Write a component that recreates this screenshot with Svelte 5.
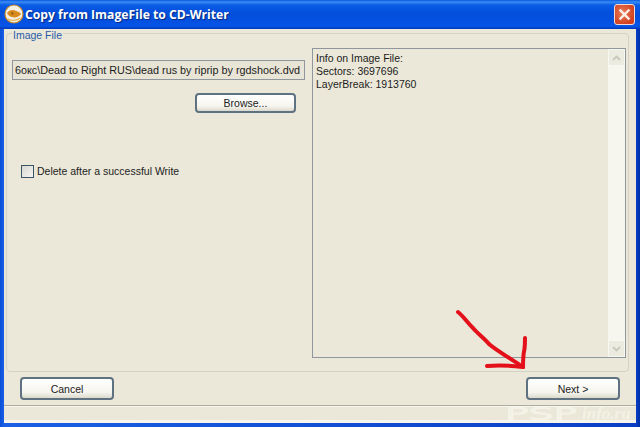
<script lang="ts">
	const path = '6окс\\Dead to Right RUS\\dead rus by riprip by rgdshock.dvd';
	const info = ['Info on Image File:', 'Sectors: 3697696', 'LayerBreak: 1913760'];
</script>

<div class="window">
	<header class="titlebar">
		<svg class="app-icon" width="20" height="20" viewBox="0 0 20 20">
			<circle cx="10" cy="10" r="9" fill="#f4efe0" stroke="#c98a2a" stroke-width="1.2" />
			<path d="M3 9c2-3 6-4 9-2 2 1 4 1 5 3-2 3-6 4-9 3-2 0-4-2-5-4z" fill="#d98a1c" />
			<path d="M7 8l3 1-2 2z" fill="#8a5312" />
			<path d="M4 15c3 2 9 2 12-1" fill="none" stroke="#e8b45a" stroke-width="1.4" />
		</svg>
		<span class="title">Copy from ImageFile to CD-Writer</span>
		<button class="close" aria-label="Close">
			<svg width="21" height="21" viewBox="0 0 21 21">
				<path d="M6 6l9 9M15 6l-9 9" stroke="#fbeee6" stroke-width="2.6" stroke-linecap="square" fill="none" />
			</svg>
		</button>
	</header>

	<main class="client">
		<section class="group">
			<div class="legend">Image File</div>
			<div class="columns">
				<div class="left">
					<div class="path">{path}</div>
					<div class="browse-row"><button class="btn browse">Browse...</button></div>
					<label class="check"><span class="box"></span>Delete after a successful Write</label>
				</div>
				<div class="info">
					<div class="info-text">
						{#each info as line}
							<div>{line}</div>
						{/each}
					</div>
					<div class="scrollbar">
						<span class="arrow">
							<svg width="11" height="8" viewBox="0 0 11 8"><path d="M2 6l3.500-3.500L9 6" fill="none" stroke="#c9c8bc" stroke-width="1.800" /></svg>
						</span>
						<span class="arrow">
							<svg width="11" height="8" viewBox="0 0 11 8"><path d="M2 2l3.500 3.500L9 2" fill="none" stroke="#c9c8bc" stroke-width="1.800" /></svg>
						</span>
					</div>
				</div>
			</div>
		</section>

		<div class="actions">
			<button class="btn wide">Cancel</button>
			<button class="btn wide">Next &gt;</button>
		</div>

		<div class="statusbar"></div>
	</main>

	<svg class="red-arrow" width="90" height="70" viewBox="0 0 90 70">
		<path
			d="M6 7c6 5 9 10 15 16 5 6 11 10 16 16 8 7 24 16 34 23"
			fill="none"
			stroke="#e4101a"
			stroke-width="4"
			stroke-linecap="round"
		/>
		<path d="M35 61c10-1 24-.5 36 1" fill="none" stroke="#e4101a" stroke-width="4" stroke-linecap="round" />
		<path d="M71 62c0-7 0-12 1.500-18 .5-4 .5-8 .5-11" fill="none" stroke="#e4101a" stroke-width="4" stroke-linecap="round" />
	</svg>

	<div class="watermark"><span class="wm-a">PSP</span><span class="wm-b">info.ru</span></div>
</div>

<style>
	:global(body) {
		margin: 0;
	}

	.window {
		position: relative;
		width: 640px;
		height: 427px;
		box-sizing: border-box;
		padding: 0 4px 4px;
		display: flex;
		flex-direction: column;
		overflow: hidden;
		background: linear-gradient(90deg, #0a4fd8 0, #1a60e4 4px, #0a3fc4 636px, #0030a8 100%);
		font-family: 'Liberation Sans', Arial, sans-serif;
		font-size: 10.500px;
		color: #1c1c1c;
	}

	.titlebar {
		height: 29px;
		flex: none;
		margin: 0 -4px;
		padding: 0 5px 0 4px;
		display: flex;
		align-items: center;
		gap: 1px;
		box-sizing: border-box;
		background: linear-gradient(180deg, #0a58e0 0, #3a8cf4 2px, #0a5ce6 5px, #0450dc 12px, #0450e0 22px, #0656ea 26px, #0338b8 29px);
	}

	.app-icon {
		flex: none;
		margin-top: -1px;
	}

	.title {
		flex: 1;
		font-family: 'Open Sans', sans-serif;
		font-weight: 700;
		font-size: 12.200px;
		color: #fff;
		text-shadow: 1px 1px 1px #0a2a80;
		white-space: nowrap;
	}

	.close {
		width: 21px;
		height: 21px;
		padding: 0;
		margin-top: -1px;
		border: 1px solid #f4dcd4;
		border-radius: 3px;
		background: radial-gradient(circle at 40% 40%, #ea7a58, #d2401e 75%);
		display: flex;
		align-items: center;
		justify-content: center;
		box-sizing: border-box;
	}

	.client {
		flex: 1;
		min-height: 0;
		display: flex;
		flex-direction: column;
		background: #ebe8d9;
	}

	.group {
		height: 339px;
		box-sizing: border-box;
		margin: 4px 7px 0 2px;
		padding: 0 2px 0 5px;
		border: 1px solid #d4d2c2;
		border-radius: 4px;
	}

	.legend {
		width: fit-content;
		margin-top: -5px;
		padding: 0 1px;
		background: #ebe8d9;
		color: #2a5aa8;
		line-height: 13px;
	}

	.columns {
		display: grid;
		grid-template-columns: 293px 314px;
		column-gap: 7px;
		margin-top: 6px;
	}

	.left {
		display: flex;
		flex-direction: column;
		padding-top: 12px;
	}

	.path {
		height: 20px;
		box-sizing: border-box;
		border: 1px solid #8f979c;
		background: #e8e5d6;
		padding-left: 2px;
		font-size: 10.800px;
		line-height: 18px;
		white-space: nowrap;
		overflow: hidden;
	}

	.browse-row {
		display: flex;
		justify-content: flex-end;
		padding-right: 9px;
		margin-top: 13px;
	}

	.btn {
		font: inherit;
		color: #222;
		padding: 0;
		border: 2px solid #5f7282;
		border-radius: 4px;
		background: linear-gradient(180deg, #fff 0, #f6f5ee 70%, #dcdacb 100%);
	}

	.browse {
		width: 101px;
		height: 20px;
		line-height: 14px;
	}

	.check {
		display: flex;
		align-items: center;
		gap: 3px;
		margin: 51px 0 0 9px;
		height: 14px;
	}

	.box {
		width: 13px;
		height: 13px;
		box-sizing: border-box;
		border: 1px solid #3c5468;
		background: linear-gradient(135deg, #d8d8d0, #f6f6f0);
	}

	.info {
		height: 310px;
		box-sizing: border-box;
		border: 1px solid #8f979c;
		display: flex;
		background: #ebe8d9;
	}

	.info-text {
		flex: 1;
		padding: 3px 0 0 3px;
		line-height: 13px;
	}

	.scrollbar {
		width: 17px;
		display: flex;
		flex-direction: column;
		justify-content: space-between;
		background: #f6f5ee;
	}

	.arrow {
		height: 17px;
		display: flex;
		align-items: center;
		justify-content: center;
		background: #ecebe0;
		border: 1px solid #f8f8f2;
		box-sizing: border-box;
	}

	.actions {
		display: flex;
		justify-content: space-between;
		margin-top: 5px;
		padding: 0 16px;
	}

	.wide {
		width: 94px;
		height: 23px;
	}

	.statusbar {
		flex: 1;
		margin-top: 5px;
		border-top: 1px solid #aeac9c;
		box-shadow: inset 0 1px 0 #f6f5ee;
		border-bottom: 3px solid #f6f5ee;
	}

	.red-arrow {
		position: absolute;
		left: 452px;
		top: 305px;
	}

	.watermark {
		position: absolute;
		left: 505px;
		top: 405px;
		width: 130px;
		height: 18px;
		display: flex;
		align-items: center;
		color: rgba(250, 249, 240, 0.6);
		white-space: nowrap;
	}

	.wm-a {
		flex: none;
		width: 77px;
		font-family: 'DejaVu Sans', sans-serif;
		font-size: 17px;
		font-weight: 400;
		transform: scaleX(2.300);
		transform-origin: left;
		-webkit-text-stroke: 0.4px rgba(250, 249, 240, 0.8);
	}

	.wm-b {
		font-family: 'Liberation Serif', serif;
		font-style: italic;
		font-weight: 700;
		font-size: 17px;
	}
</style>
